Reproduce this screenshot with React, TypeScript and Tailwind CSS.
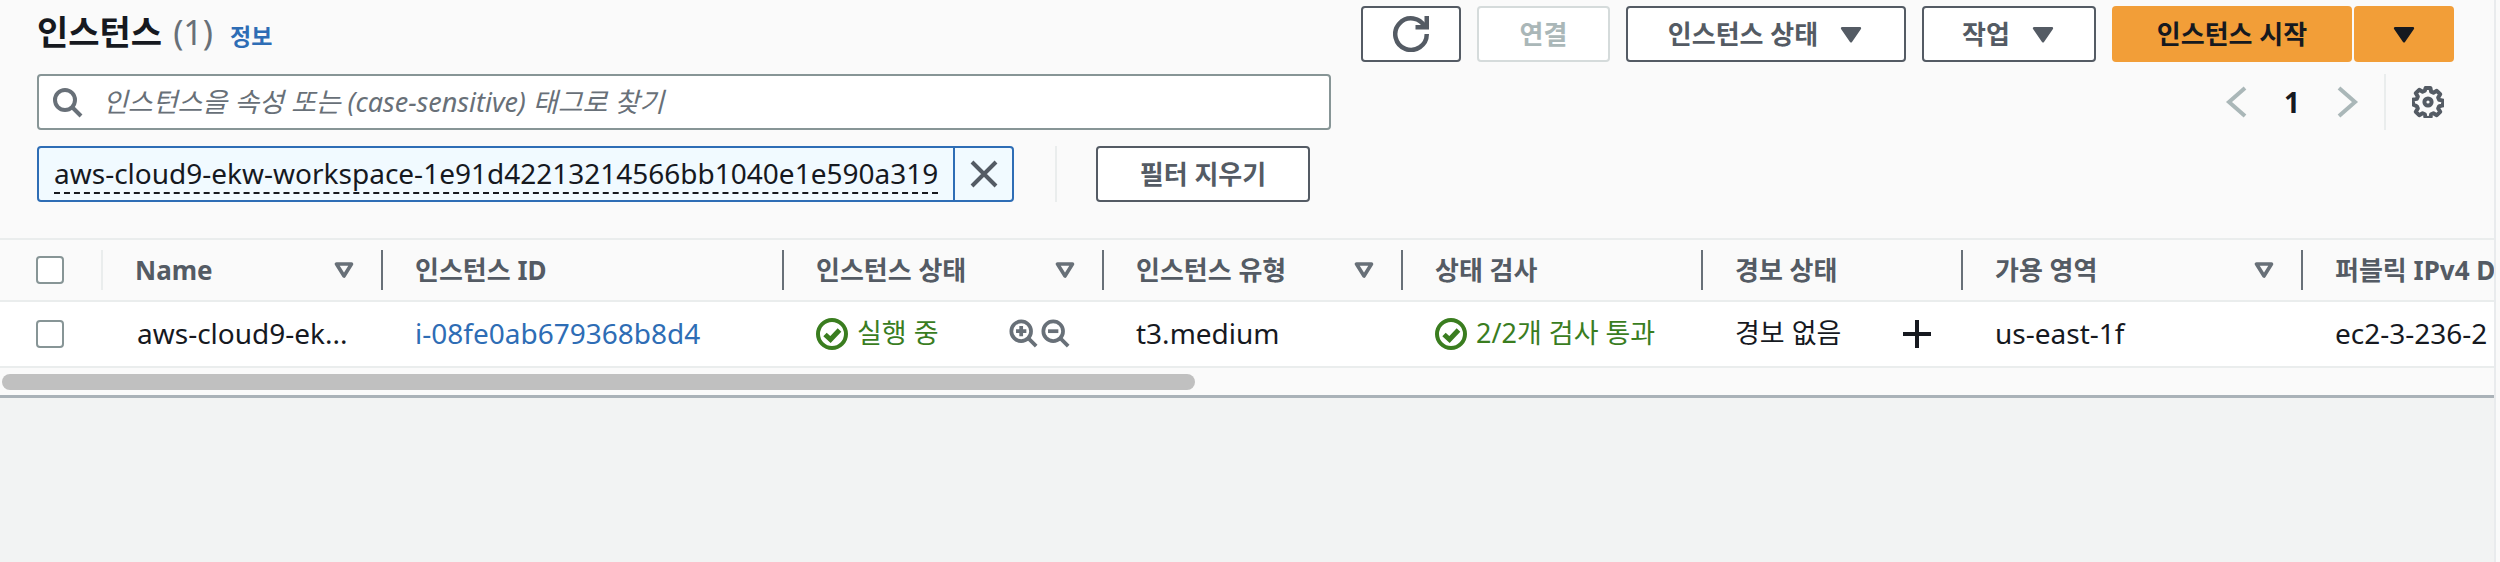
const Caret = ({ className }: { className: string }) => (
  <svg viewBox="0 0 16 16" className={className} fill="currentColor" stroke="currentColor" strokeWidth="1.5" strokeLinejoin="round">
    <path d="M2.5 4.5h11L8 12.5z" />
  </svg>
);

const SortIcon = () => (
  <svg viewBox="0 0 20 16" className="w-[20px] h-[16px] text-[#687078] shrink-0" fill="none" stroke="currentColor" strokeWidth="3.6" strokeLinejoin="round">
    <path d="M2.5 2h15L10 14z" />
  </svg>
);

const Check = () => (
  <svg viewBox="0 0 32 32" className="w-[32px] h-[32px] shrink-0" fill="none" stroke="currentColor" strokeWidth="4">
    <circle cx="16" cy="16" r="14" />
    <path d="M9 16.5l5.5 5L23.5 12" strokeWidth="5" />
  </svg>
);

const Btn = ({ w, children, disabled }: { w: string; children: React.ReactNode; disabled?: boolean }) => (
  <div className={`${w} h-[56px] bg-white border-2 rounded-[4px] flex items-center justify-center font-bold text-[26px] shrink-0 ${disabled ? "border-[#d5dbdb] text-[#aab7b8]" : "border-[#545b64] text-[#545b64]"}`}>
    {children}
  </div>
);

const columns = [
  { name: "Name", w: "w-[280px]", sort: true },
  { name: "인스턴스 ID", w: "w-[401px]", sort: false },
  { name: "인스턴스 상태", w: "w-[320px]", sort: true },
  { name: "인스턴스 유형", w: "w-[299px]", sort: true },
  { name: "상태 검사", w: "w-[300px]", sort: false },
  { name: "경보 상태", w: "w-[260px]", sort: false },
  { name: "가용 영역", w: "w-[340px]", sort: true },
  { name: "퍼블릭 IPv4 DNS", w: "w-[300px]", sort: false },
];

export default function App() {
  return (
    <div className="w-[2500px] h-[562px] overflow-hidden flex bg-[#fafafa] text-[#16191f] font-['Noto_Sans','Noto_Sans_CJK_KR',sans-serif]">
      <div className="w-[2494px] h-[562px] bg-[#f2f3f3] shrink-0">
        <div className="h-[398px] bg-[#fafafa] border-b-[3px] border-[#aab2b8] overflow-hidden">
          {/* Header */}
          <div className="pl-[37px] pr-[40px] pt-[6px] h-[238px]">
            <div className="flex justify-between h-[56px]">
              <div className="flex items-baseline pt-[1px]">
                <h1 className="text-[34px] font-bold leading-[50px]">인스턴스</h1>
                <span className="text-[34px] leading-[50px] text-[#687078] ml-[11px]">(1)</span>
                <a className="text-[23px] font-bold text-[#2e6db5] ml-[17px]">정보</a>
              </div>
              <div className="flex gap-[16px]">
                <Btn w="w-[100px]">
                  <svg viewBox="0 0 16 16" className="w-[36px] h-[36px]" fill="none" stroke="currentColor" strokeWidth="2">
                    <path d="M10 5h5V0" />
                    <path d="M15 8a7 7 0 1 1-.7-3" />
                  </svg>
                </Btn>
                <Btn w="w-[133px]" disabled>연결</Btn>
                <Btn w="w-[280px]">
                  인스턴스 상태
                  <Caret className="w-[26px] h-[26px] ml-[20px]" />
                </Btn>
                <Btn w="w-[174px]">
                  작업
                  <Caret className="w-[26px] h-[26px] ml-[20px]" />
                </Btn>
                <div className="flex gap-[2px]">
                  <div className="w-[240px] h-[56px] bg-[#f29e38] rounded-[4px] flex items-center justify-center font-bold text-[26px]">
                    인스턴스 시작
                  </div>
                  <div className="w-[100px] h-[56px] bg-[#f29e38] rounded-[4px] flex items-center justify-center">
                    <Caret className="w-[26px] h-[26px]" />
                  </div>
                </div>
              </div>
            </div>

            <div className="flex justify-between mt-[12px]">
              <div className="w-[1294px]">
                <div className="h-[56px] bg-white border-2 border-[#879596] rounded-[4px] flex items-center pl-[12px]">
                  <svg viewBox="0 0 16 16" className="w-[32px] h-[32px] text-[#687078] shrink-0" fill="none" stroke="currentColor" strokeWidth="2">
                    <circle cx="7" cy="7" r="5" />
                    <path d="M15 15l-4.5-4.5" />
                  </svg>
                  <span className="italic text-[27px] text-[#687078] ml-[20px]">인스턴스을 속성 또는 (case-sensitive) 태그로 찾기</span>
                </div>
                <div className="flex items-center mt-[16px]">
                  <div className="w-[977px] h-[56px] bg-[#f1faff] border-2 border-[#2e6db5] rounded-[4px] flex">
                    <div className="w-[916px] flex items-center pl-[15px] border-r-2 border-[#2e6db5] shrink-0">
                      <span className="text-[28px] leading-[37px] border-b-2 border-dashed border-[#16191f] whitespace-nowrap">aws-cloud9-ekw-workspace-1e91d42213214566bb1040e1e590a319</span>
                    </div>
                    <div className="flex-1 flex items-center justify-center text-[#545b64]">
                      <svg viewBox="0 0 16 16" className="w-[32px] h-[32px]" fill="none" stroke="currentColor" strokeWidth="2">
                        <path d="M2 2l12 12M14 2L2 14" />
                      </svg>
                    </div>
                  </div>
                  <div className="w-[2px] h-[56px] bg-[#eaeded] ml-[41px]" />
                  <div className="ml-[39px]">
                    <Btn w="w-[214px]">필터 지우기</Btn>
                  </div>
                </div>
              </div>
              <div className="flex items-start pr-[10px]">
                <div className="flex items-center h-[56px] text-[#aab7b8]">
                  <svg viewBox="0 0 24 32" className="w-[24px] h-[32px]" fill="none" stroke="currentColor" strokeWidth="4"><path d="M21 2L5 16l16 14" /></svg>
                  <span className="text-[#16191f] font-bold text-[28px] w-[88px] text-center">1</span>
                  <svg viewBox="0 0 24 32" className="w-[24px] h-[32px]" fill="none" stroke="currentColor" strokeWidth="4"><path d="M3 2l16 14L3 30" /></svg>
                </div>
                <div className="w-[2px] h-[56px] bg-[#eaeded] ml-[24px]" />
                <svg viewBox="0 0 16 16" className="w-[32px] h-[32px] ml-[26px] mt-[12px] text-[#545b64]" fill="none" stroke="currentColor" strokeWidth="2" strokeLinejoin="round">
                  <path d="M6.8 1h2.4l.4 1.9 1.1.5 1.7-1 1.7 1.7-1 1.7.5 1.1 1.9.4v2.4l-1.9.4-.5 1.1 1 1.7-1.7 1.7-1.7-1-1.1.5-.4 1.9H6.8l-.4-1.9-1.1-.5-1.7 1-1.7-1.7 1-1.7-.5-1.1L.5 9.2V6.8l1.9-.4.5-1.1-1-1.7 1.7-1.7 1.7 1 1.1-.5z" />
                  <circle cx="8" cy="8" r="1.8" />
                </svg>
              </div>
            </div>
          </div>

          {/* Table */}
          <div className="border-t-2 border-[#eaeded]">
            <div className="flex h-[62px] items-center border-b-2 border-[#eaeded] bg-[#fafafa] whitespace-nowrap">
              <div className="w-[103px] h-[40px] flex items-center pl-[36px] border-r-2 border-[#eaeded] shrink-0">
                <div className="w-[28px] h-[28px] bg-white border-2 border-[#879596] rounded-[4px]" />
              </div>
              {columns.map((c, i) => (
                <div key={c.name} className={`${c.w} h-[40px] flex items-center justify-between pl-[32px] pr-[27px] shrink-0 font-bold text-[26px] text-[#545b64] ${i < columns.length - 1 ? "border-r-2 border-[#687078]" : ""}`}>
                  <span>{c.name}</span>
                  {c.sort && <SortIcon />}
                </div>
              ))}
            </div>
            <div className="flex h-[66px] items-center bg-white border-b-2 border-[#eaeded] text-[28px] whitespace-nowrap">
              <div className="w-[103px] pl-[36px] shrink-0">
                <div className="w-[28px] h-[28px] bg-white border-2 border-[#879596] rounded-[4px]" />
              </div>
              <div className="w-[280px] pl-[34px] pb-[2px] shrink-0">aws-cloud9-ek...</div>
              <div className="w-[401px] pl-[32px] pb-[2px] shrink-0 text-[#2e6db5]">i-08fe0ab679368b8d4</div>
              <div className="w-[320px] pl-[32px] shrink-0 flex items-center text-[#3a7d1f]">
                <Check />
                <span className="ml-[9px] pb-[2px] text-[27px]">실행 중</span>
                <div className="flex ml-[70px] text-[#687078] gap-[2px]">
                  <svg viewBox="0 0 32 32" className="w-[30px] h-[30px]" fill="none" stroke="currentColor" strokeWidth="4">
                    <circle cx="13" cy="13" r="10.5" />
                    <path d="M21 21l8 8" />
                    <path d="M7.5 13h11M13 7.5v11" />
                  </svg>
                  <svg viewBox="0 0 32 32" className="w-[30px] h-[30px]" fill="none" stroke="currentColor" strokeWidth="4">
                    <circle cx="13" cy="13" r="10.5" />
                    <path d="M21 21l8 8" />
                    <path d="M7.5 13h11" />
                  </svg>
                </div>
              </div>
              <div className="w-[299px] pl-[32px] pb-[2px] shrink-0">t3.medium</div>
              <div className="w-[300px] pl-[32px] shrink-0 flex items-center text-[#3a7d1f]">
                <Check />
                <span className="ml-[9px] pb-[2px] text-[27px]">2/2개 검사 통과</span>
              </div>
              <div className="w-[260px] pl-[32px] shrink-0 flex items-center">
                <span className="pb-[2px] text-[27px]">경보 없음</span>
                <svg viewBox="0 0 28 28" className="w-[28px] h-[28px] ml-[62px]" fill="none" stroke="currentColor" strokeWidth="4">
                  <path d="M0 14h28M14 0v28" />
                </svg>
              </div>
              <div className="w-[340px] pl-[32px] pb-[2px] shrink-0">us-east-1f</div>
              <div className="w-[300px] pl-[32px] pb-[2px] shrink-0">ec2-3-236-2</div>
            </div>
            {/* Scrollbar */}
            <div className="pt-[6px] pl-[2px]">
              <div className="w-[1193px] h-[16px] rounded-full bg-[#c0c0c0]" />
            </div>
          </div>
        </div>
      </div>
      <div className="w-[2px] h-[562px] bg-[#e9ebed] shrink-0" />
    </div>
  );
}
